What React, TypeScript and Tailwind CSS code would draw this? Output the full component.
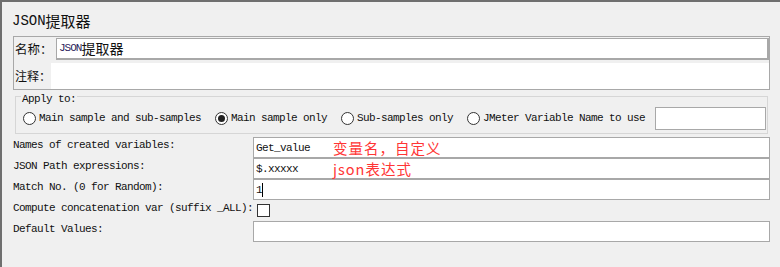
const mono = "font-['Liberation_Mono','Noto_Sans_CJK_SC',monospace] text-[11px] tracking-[-0.6px] text-[#111]";
const cjk = "font-['Noto_Sans_CJK_SC',sans-serif]";

function Radio({ label, checked }: { label: string; checked?: boolean }) {
  return (
    <div className="flex items-center gap-[3px]">
      <div className="flex h-[13px] w-[13px] items-center justify-center rounded-full border border-[#333] bg-white">
        {checked && <div className="h-[7px] w-[7px] rounded-full bg-[#222]" />}
      </div>
      <span className={`${mono} leading-[14px] whitespace-pre`}>{label}</span>
    </div>
  );
}

function Row({ label, children }: { label: string; children: React.ReactNode }) {
  return (
    <div className="grid h-[21px] grid-cols-[240px_1fr]">
      <div className={`${mono} flex items-center pb-[4px] whitespace-pre`}>{label}</div>
      {children}
    </div>
  );
}

function Field({ value, note, caret }: { value?: string; note?: string; caret?: boolean }) {
  return (
    <div className="relative flex h-[21px] items-center border border-[#a8a8a8] bg-white pl-[2px]">
      <span className={`${mono} leading-[14px] whitespace-pre`}>{value}</span>
      {caret && <span className="h-[14px] w-px bg-black" />}
      {note && (
        <span
          className={`${cjk} absolute left-[79px] top-1/2 -translate-y-1/2 whitespace-nowrap text-[14.5px] leading-none tracking-[1px] text-[#ff3535]`}
        >
          {note}
        </span>
      )}
    </div>
  );
}

export default function App() {
  return (
    <div className="h-[267px] w-[780px] overflow-hidden border-l-2 border-t-2 border-[#6f6f6f] bg-[#f0f0f0] pl-[11px] pr-[10px] pt-[6px]">
      <div className="-ml-[1px] flex h-[28px] items-center pb-[2px] text-[#111]">
        <span className="font-['Liberation_Mono',monospace] text-[14px]">JSON</span>
        <span className={`${cjk} text-[15px]`}>提取器</span>
      </div>

      <div className="h-[54px] border border-[#a8a8a8]">
        <div className="mt-[1px] flex h-[22px]">
          <div className={`${cjk} flex w-[42px] shrink-0 items-center whitespace-nowrap pl-[1px] text-[12.5px] text-[#111]`}>
            名称：
          </div>
          <div className="flex flex-1 items-center border border-r-2 border-b-2 border-[#a8a8a8] bg-white pl-[2px]">
            <span className="font-['Liberation_Mono',monospace] text-[11px] tracking-[-1px] text-[#2a1a5a]">JSON</span>
            <span className={`${cjk} text-[14px] text-[#111]`}>提取器</span>
          </div>
        </div>
        <div className="mt-[3px] flex h-[26px]">
          <div className={`${cjk} flex w-[37px] shrink-0 items-center whitespace-nowrap pl-[1px] text-[12px] text-[#111]`}>
            注释：
          </div>
          <div className="flex-1 bg-white" />
        </div>
      </div>

      <div className="relative mx-[2px] mt-[6px] h-[38px] border border-[#d6d6d6]">
        <span className={`${mono} absolute -top-[5px] left-[5px] bg-[#f0f0f0] px-[1px] leading-[14px]`}>Apply to:</span>
        <div className="flex h-full items-center pl-[7px] pt-[6px]">
          <div className="flex items-center gap-[14px]">
            <Radio label="Main sample and sub-samples" />
            <Radio label="Main sample only" checked />
            <Radio label="Sub-samples only" />
            <Radio label="JMeter Variable Name to use" />
          </div>
          <div className="ml-[10px] h-[23px] w-[111px] border border-[#a8a8a8] bg-white" />
        </div>
      </div>

      <div className="mt-[3px] flex flex-col">
        <Row label="Names of created variables:">
          <Field value="Get_value" note="变量名，自定义" />
        </Row>
        <Row label="JSON Path expressions:">
          <Field value="$.xxxxx" note="json表达式" />
        </Row>
        <Row label="Match No. (0 for Random):">
          <Field value="1" caret />
        </Row>
        <Row label="Compute concatenation var (suffix _ALL):">
          <div className="flex items-center pl-[4px]">
            <div className="h-[13px] w-[13px] border border-[#333] bg-white" />
          </div>
        </Row>
        <Row label="Default Values:">
          <Field />
        </Row>
      </div>
    </div>
  );
}
